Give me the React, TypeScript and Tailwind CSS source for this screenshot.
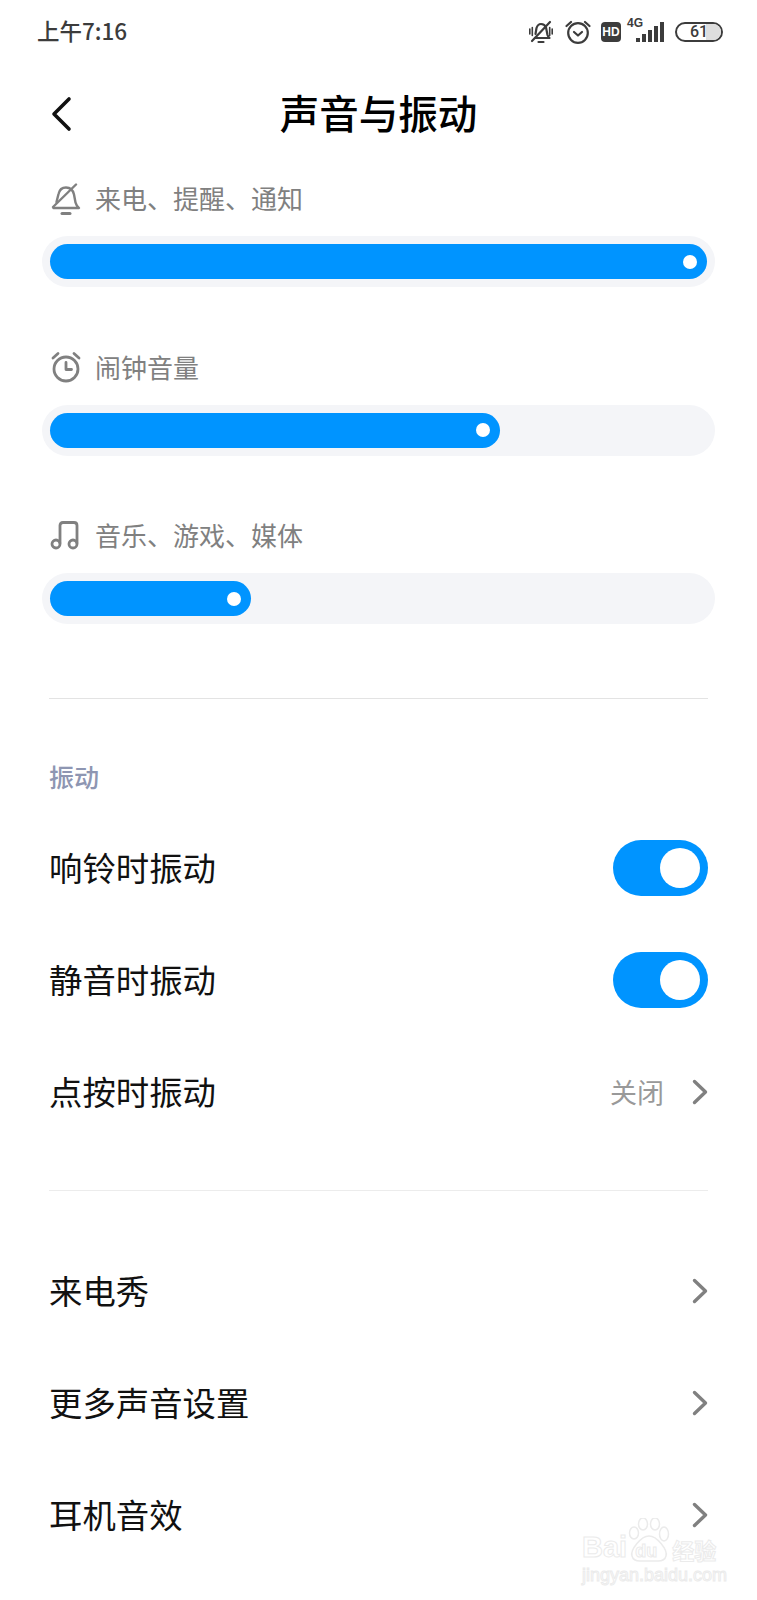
import { ReactNode } from "react";

const font = "font-['Noto_Sans_CJK_SC','Noto_Sans',sans-serif]";

const BellSlash = () => (
  <svg className="mt-[4px]" width="32" height="34" viewBox="0 0 32 34" fill="none" stroke="#808080" strokeWidth="2.400" strokeLinecap="round" strokeLinejoin="round">
    <path d="M6.500 19 8.500 11C9.500 6.500 12.500 4.500 16 4.500C20 4.500 23 7 24 11.500L25.500 19.500C26 22 27.500 23.500 29 25H3.500" />
    <path d="M3 24 26 1.500" />
    <path d="M12 30.500H20" strokeWidth="3" />
  </svg>
);

const AlarmIcon = () => (
  <svg width="32" height="32" viewBox="0 0 32 32" fill="none" stroke="#808080" strokeWidth="2.800" strokeLinecap="round" strokeLinejoin="round">
    <circle cx="16" cy="18" r="12" />
    <path d="M16 11.500V18.500H21.500" />
    <path d="M3 7 8 2.500M29 7 24 2.500" />
  </svg>
);

const MusicIcon = () => (
  <svg width="30" height="30" viewBox="0 0 30 30" fill="none" stroke="#808080" strokeWidth="2.800" strokeLinecap="round" strokeLinejoin="round">
    <path d="M10 23V5.500C10 3.500 11 2.500 13 2.500H24C26 2.500 27 3.500 27 5.500V23" />
    <circle cx="6" cy="24" r="4" />
    <circle cx="23" cy="24" r="4" />
  </svg>
);

const Chevron = () => (
  <svg width="16" height="26" viewBox="0 0 16 26" fill="none" stroke="#808080" strokeWidth="3.400" strokeLinecap="round" strokeLinejoin="round">
    <path d="M2.500 2.500 13.500 13 2.500 23.500" />
  </svg>
);

const StatusIcons = () => (
  <div className="flex items-center">
    <svg width="24" height="24" viewBox="0 0 24 24" fill="none" stroke="#3c3c3c" strokeWidth="2.200" strokeLinecap="round" strokeLinejoin="round">
      <path d="M6.500 14 7.500 8C8.500 5 10 4 12 4C14 4 16 5 17 7.500L18.500 15C19 16.500 19.500 17 20.500 18H6" />
      <path d="M3 21 21 2" />
      <path d="M9.500 22H14.500" />
      <path d="M0.800 9V14M3.300 7.500V15.500M23.200 9V14M20.700 7.500V15.500" strokeWidth="1.600" />
    </svg>
    <svg className="ml-[12px]" width="26" height="24" viewBox="0 0 26 24" fill="none" stroke="#3c3c3c" strokeWidth="2.200" strokeLinecap="round" strokeLinejoin="round">
      <circle cx="13" cy="13" r="9.800" />
      <path d="M9 12 13 15.500 17 12" />
      <path d="M1.500 6 6 2M24.500 6 20 2" />
    </svg>
    <div className="ml-[10px] flex h-[20px] w-[20px] items-center justify-center rounded-[4px] bg-[#3c3c3c] text-[12px] font-bold leading-none text-white font-['Liberation_Sans',sans-serif]">
      HD
    </div>
    <div className="relative ml-[6px] h-[24px] w-[38px]">
      <span className="absolute left-0 top-[-3px] text-[12px] font-bold leading-none text-[#3c3c3c] font-['Liberation_Sans',sans-serif]">4G</span>
      <svg className="absolute bottom-[2px] left-[9px]" width="28" height="20" viewBox="0 0 28 20" fill="#3c3c3c">
        <rect x="0" y="16" width="4" height="4" />
        <rect x="6" y="12" width="4" height="8" />
        <rect x="12" y="8" width="4" height="12" />
        <rect x="18" y="4" width="4" height="16" />
        <rect x="24" y="0" width="4" height="20" />
      </svg>
    </div>
    <div className="relative ml-[10px] flex h-[20px] w-[48px] items-center justify-center overflow-hidden rounded-full border-2 border-[#3c3c3c]">
      <div className="absolute inset-y-0 right-0 w-[15px] bg-[#dedede]" />
      <span className="relative text-[16px] font-medium leading-none text-[#3c3c3c] font-['Roboto',sans-serif]">61</span>
    </div>
  </div>
);

const VolumeBlock = ({ icon, label, fill }: { icon: ReactNode; label: string; fill: string }) => (
  <div>
    <div className="flex h-[48px] items-center pb-[4px] pl-[50px]">
      <div className="flex w-[45px] items-center">{icon}</div>
      <span className="text-[26px] leading-none text-[#808080]">{label}</span>
    </div>
    <div className="mx-[42px] mt-[12px] h-[51px] rounded-full bg-[#f4f5f8] p-[8px]">
      <div className={`flex h-[35px] items-center justify-end rounded-full bg-[#0094ff] pr-[10px] ${fill}`}>
        <div className="h-[14px] w-[14px] rounded-full bg-white" />
      </div>
    </div>
  </div>
);

const Toggle = () => (
  <div className="flex h-[56px] w-[95px] items-center justify-end rounded-full bg-[#0094ff] pr-[8px]">
    <div className="h-[40px] w-[40px] rounded-full bg-white" />
  </div>
);

const Row = ({ title, children }: { title: string; children: ReactNode }) => (
  <div className="flex h-[112px] items-center justify-between">
    <span className="pb-[2px] text-[33.400px] leading-none text-[#111111]">{title}</span>
    {children}
  </div>
);

const Watermark = () => (
  <div className="absolute left-[582px] top-[1518px] w-[140px] text-transparent [-webkit-text-stroke:1px_#ebebeb]">
    <svg className="absolute left-[45px] top-0" width="44" height="44" viewBox="0 0 44 44" fill="none" stroke="#ebebeb" strokeWidth="1.500">
      <ellipse cx="7" cy="15" rx="4.500" ry="6" />
      <ellipse cx="16" cy="6" rx="4.500" ry="6" />
      <ellipse cx="28" cy="6" rx="4.500" ry="6" />
      <ellipse cx="37" cy="16" rx="4.500" ry="7" />
      <path d="M22 18C14 18 3 32 5 38C6 42 9 43 13 43H31C35 43 38 42 39 38C41 32 30 18 22 18Z" />
    </svg>
    <div className="flex h-[44px] items-end">
      <span className="font-['Liberation_Sans',sans-serif] text-[29px] font-bold leading-none">Bai</span>
      <span className="relative ml-[8px] font-['Liberation_Sans',sans-serif] text-[18px] font-bold leading-[22px]">du</span>
      <span className="ml-[15px] text-[22px] font-bold leading-[26px]">经验</span>
    </div>
    <div className="mt-[4px] whitespace-nowrap font-['Liberation_Sans',sans-serif] text-[18px] leading-none">jingyan.baidu.com</div>
  </div>
);

export default function App() {
  return (
    <div className={`relative h-[1600px] w-[757px] overflow-hidden bg-white ${font}`}>
      <div className="flex h-[64px] items-center justify-between pl-[37px] pr-[34px]">
        <span className="pb-[4px] text-[22.500px] font-medium leading-none text-[#3c3c3c]">上午7:16</span>
        <StatusIcons />
      </div>

      <div className="relative flex h-[102px] items-center justify-center pb-[6px]">
        <svg className="absolute left-[50px] top-[32px]" width="24" height="36" viewBox="0 0 24 36" fill="none" stroke="#111111" strokeWidth="3.600" strokeLinecap="round" strokeLinejoin="round">
          <path d="M19 3 4 18 19 33" />
        </svg>
        <h1 className="text-[39.500px] font-medium leading-none text-[#000000]">声音与振动</h1>
      </div>

      <div className="mt-[10px] flex flex-col gap-[57.500px]">
        <VolumeBlock icon={<BellSlash />} label="来电、提醒、通知" fill="w-[657px]" />
        <VolumeBlock icon={<AlarmIcon />} label="闹钟音量" fill="w-[450px]" />
        <VolumeBlock icon={<MusicIcon />} label="音乐、游戏、媒体" fill="w-[201px]" />
      </div>

      <div className="mx-[49px] mt-[74px]">
        <div className="h-px bg-[#e3e3e3]" />
        <div className="mt-[57px] flex h-[40px] items-center text-[25px] font-medium leading-none text-[#8e96b2]">振动</div>
        <div className="mt-[16px]">
          <Row title="响铃时振动"><Toggle /></Row>
          <Row title="静音时振动"><Toggle /></Row>
          <Row title="点按时振动">
            <div className="flex items-center gap-[28px]">
              <span className="pb-[2px] text-[27px] leading-none text-[#999999]">关闭</span>
              <Chevron />
            </div>
          </Row>
        </div>
        <div className="mt-[42px] h-px bg-[#ececec]" />
        <div className="mt-[43.500px]">
          <Row title="来电秀"><Chevron /></Row>
          <Row title="更多声音设置"><Chevron /></Row>
          <Row title="耳机音效"><Chevron /></Row>
        </div>
      </div>

      <Watermark />
    </div>
  );
}
